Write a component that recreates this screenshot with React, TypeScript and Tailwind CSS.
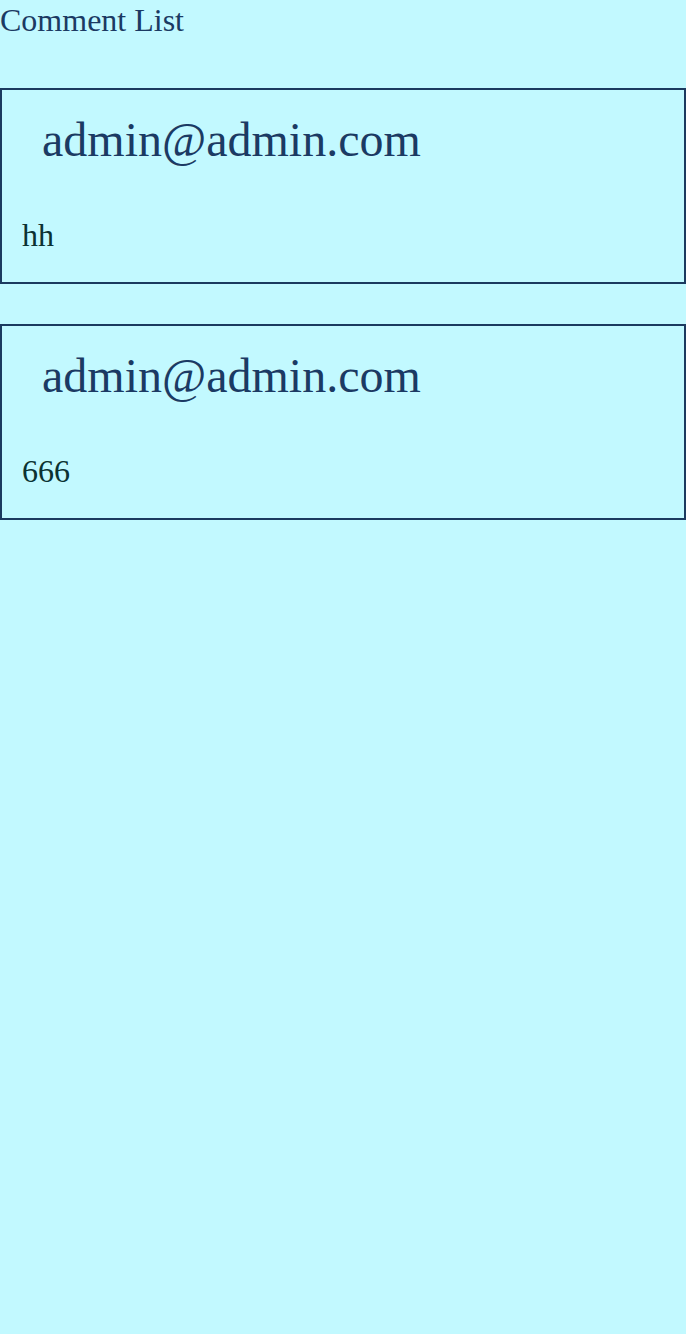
import React from "react";

const comments = [
  { email: "admin@admin.com", body: "hh" },
  { email: "admin@admin.com", body: "666" },
];

export default function App() {
  return (
    <div className="min-h-[1334px] w-full bg-[#c2f9ff] font-['Liberation_Serif',serif] text-[#1b3a63]">
      <div className="pt-[2px] text-[32px] leading-[37px]">Comment List</div>
      <div className="mt-[49px] flex flex-col gap-[40px]">
        {comments.map((c, i) => (
          <div key={i} className="h-[196px] border-2 border-[#1b3a5f] px-[20px]">
            <div className="mt-[22px] ml-[20px] text-[48px] leading-[55px]">{c.email}</div>
            <div className="mt-[50px] text-[32px] leading-[37px] text-[#0b3232]">{c.body}</div>
          </div>
        ))}
      </div>
    </div>
  );
}
